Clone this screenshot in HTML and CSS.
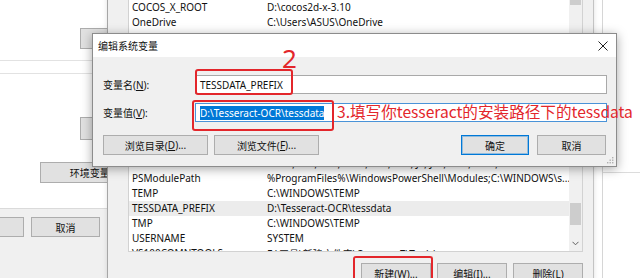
FILE: index.html
```html
<!DOCTYPE html>
<html lang="zh-CN">
<head>
<meta charset="utf-8">
<title>编辑系统变量</title>
<link rel="stylesheet" href="styles.css">
</head>
<body>
<div class="win-bg"><div class="bg-rule"></div></div>

<div class="win-sys">
  <div class="sys-panel">
    <div class="btn sys-btn-a">设置(S)...</div>
    <div class="sys-rule first"></div>
    <div class="sys-rule second"></div>
    <div class="btn sys-btn-b">设置(E)...</div>
    <div class="btn sys-btn-c">环境变量(<u>N</u>)...</div>
  </div>
  <div class="sys-foot">
    <div class="btn sys-foot-btn">确定</div>
    <div class="btn sys-foot-btn">取消</div>
  </div>
</div>

<div class="win-env">
  <div class="list list-top">
    <div class="rows">
      <div class="row"><span class="k">ChocolateyInstall</span><span class="v">C:\ProgramData\chocolatey</span></div>
      <div class="row"><span class="k">ChocolateyLastPathUpdate</span><span class="v">132356789012345678</span></div>
      <div class="row"><span class="k">COCOS_X_ROOT</span><span class="v">D:\cocos2d-x-3.10</span></div>
      <div class="row"><span class="k">OneDrive</span><span class="v">C:\Users\ASUS\OneDrive</span></div>
      <div class="row"><span class="k">OneDriveConsumer</span><span class="v">C:\Users\ASUS\OneDrive</span></div>
      <div class="row"><span class="k">Path</span><span class="v">C:\Users\ASUS\AppData\Local\Microsoft\WindowsApps;</span></div>
      <div class="row"><span class="k">TEMP</span><span class="v">C:\Users\ASUS\AppData\Local\Temp</span></div>
      <div class="row"><span class="k">TMP</span><span class="v">C:\Users\ASUS\AppData\Local\Temp</span></div>
    </div>
    <div class="vscroll">
      <div class="thumb thumb-top"></div>
    </div>
  </div>

  <div class="list list-bottom">
    <div class="rows">
      <div class="row"><span class="k">NUMBER_OF_PROCESSORS</span><span class="v">8</span></div>
      <div class="row"><span class="k">OS</span><span class="v">Windows_NT</span></div>
      <div class="row"><span class="k">Path</span><span class="v">C:\ProgramData\Oracle\Java\javapath;C:\WINDOWS\system32;</span></div>
      <div class="row"><span class="k">PATHEXT</span><span class="v">.COM;.EXE;.BAT;.CMD;.VBS;.VBE;.JS;.JSE;.WSF;.WSH;.MSC</span></div>
      <div class="row"><span class="k">PSModulePath</span><span class="v">%ProgramFiles%\WindowsPowerShell\Modules;C:\WINDOWS\s...</span></div>
      <div class="row"><span class="k">TEMP</span><span class="v">C:\WINDOWS\TEMP</span></div>
      <div class="row sel"><span class="k">TESSDATA_PREFIX</span><span class="v">D:\Tesseract-OCR\tessdata</span></div>
      <div class="row"><span class="k">TMP</span><span class="v">C:\WINDOWS\TEMP</span></div>
      <div class="row"><span class="k">USERNAME</span><span class="v">SYSTEM</span></div>
      <div class="row"><span class="k">VS100COMNTOOLS</span><span class="v">E:\工具\新建文件夹\Common7\Tools\</span></div>
    </div>
    <div class="vscroll">
      <div class="thumb thumb-bottom"></div>
      <svg class="chev" width="7" height="5" viewBox="0 0 7 5"><path d="M0.5 0.8 L3.5 3.8 L6.5 0.8" fill="none" stroke="#606060" stroke-width="1"/></svg>
    </div>
  </div>

  <div class="env-btns">
    <div class="btn env-btn">新建(<u>W</u>)...</div>
    <div class="btn env-btn">编辑(<u>I</u>)...</div>
    <div class="btn env-btn">删除(<u>L</u>)</div>
  </div>
</div>

<div class="dlg">
  <div class="dlg-title">
    <span class="dlg-title-text">编辑系统变量</span>
    <svg class="dlg-close" width="10" height="10" viewBox="0 0 10 10"><path d="M0.5 0.5 L9.5 9.5 M9.5 0.5 L0.5 9.5" stroke="#222" stroke-width="1" fill="none"/></svg>
  </div>
  <div class="dlg-body">
    <div class="field">
      <label class="field-label">变量名(<u>N</u>):</label>
      <div class="input">TESSDATA_PREFIX</div>
    </div>
    <div class="field field-2">
      <label class="field-label">变量值(<u>V</u>):</label>
      <div class="input focus"><span class="selected">D:\Tesseract-OCR\tessdata</span></div>
    </div>
    <div class="dlg-btns">
      <div class="btn browse">浏览目录(<u>D</u>)...</div>
      <div class="btn browse">浏览文件(<u>F</u>)...</div>
      <div class="btn ok default">确定</div>
      <div class="btn ok">取消</div>
    </div>
  </div>
  <svg class="grip" width="7" height="7" viewBox="0 0 7 7"><g fill="#b0b0b0"><rect x="5" y="0" width="1.4" height="1.4"/><rect x="2.5" y="2.5" width="1.4" height="1.4"/><rect x="5" y="2.5" width="1.4" height="1.4"/><rect x="0" y="5" width="1.4" height="1.4"/><rect x="2.5" y="5" width="1.4" height="1.4"/><rect x="5" y="5" width="1.4" height="1.4"/></g></svg>
</div>

<div class="mark-2">2</div>
<div class="box box-1"></div>
<div class="box box-2"></div>
<div class="box box-3"></div>
<div class="note">3.填写你tesseract的安装路径下的tessdata</div>
</body>
</html>
```

FILE: styles.css
```css
* { box-sizing: border-box; }

body {
  margin: 0;
  width: 640px;
  height: 278px;
  overflow: hidden;
  position: relative;
  background: #ffffff;
  font-family: "Noto Sans", "Noto Sans CJK SC", sans-serif;
  font-size: 10px;
  color: #000;
}

u { text-decoration: underline; text-underline-offset: 1px; }

.btn {
  background: #e1e1e1;
  border: 1px solid #adadad;
  display: flex;
  align-items: center;
  justify-content: center;
  white-space: nowrap;
  font-family: "Noto Sans", "Noto Sans CJK SC", sans-serif;
  font-size: 10px;
  color: #111;
}

/* background window at the right */
.win-bg {
  position: absolute;
  left: 602px;
  top: -2px;
  width: 38px;
  height: 280px;
  border-left: 1px solid #d6d6d6;
  background: #fff;
}
.bg-rule {
  margin-top: 174px;
  border-top: 1px solid #dcdcdc;
}

/* system properties window (left) */
.win-sys {
  position: absolute;
  left: -220px;
  top: 0;
  width: 350px;
  height: 278px;
  display: flex;
  flex-direction: column;
}
.sys-panel {
  height: 209px;
  background: #fff;
  border-bottom: 1px solid #dadada;
  display: flex;
  flex-direction: column;
  align-items: flex-start;
}
.sys-btn-a { margin: 28px 0 0 300px; width: 121px; height: 21px; }
.sys-rule { align-self: stretch; border-top: 1px solid #e2e2e2; }
.sys-rule.first { margin-top: 11px; }
.sys-rule.second { margin-top: 12px; }
.sys-btn-b { margin: 43px 0 0 300px; width: 121px; height: 23px; }
.sys-btn-c { margin: 22px 0 0 260px; width: 121px; height: 21px; }
.sys-foot {
  flex: 1;
  background: #f0f0f0;
  display: flex;
  gap: 7px;
  padding: 8px 0 0 175px;
}
.sys-foot-btn { width: 69px; height: 20px; }

/* environment variables window */
.win-env {
  position: absolute;
  left: 107px;
  top: -31.5px;
  width: 487px;
  height: 320px;
  background: #f0f0f0;
  border-left: 1px solid #a6a6a6;
  border-right: 1px solid #c4c4c4;
  padding: 0 10px 0 20px;
  display: flex;
  flex-direction: column;
  box-shadow: 0 0 5px rgba(0,0,0,0.12);
}
.list {
  background: #fff;
  border: 1px solid #d2d2d2;
  display: flex;
  overflow: hidden;
  flex: none;
}
.list-top { height: 123px; }
.list-bottom { margin-top: 18px; height: 142.5px; }
.rows { flex: 1; min-width: 0; }
.row {
  display: flex;
  align-items: center;
  height: 15px;
  white-space: nowrap;
  color: #111;
}
.row.sel { background: #ececec; }
.row .k { width: 138px; padding-left: 3px; flex: none; overflow: hidden; }
.row .v { flex: 1; overflow: hidden; }

.vscroll {
  width: 13px;
  flex: none;
  background: #f0f0f0;
  display: flex;
  flex-direction: column;
  align-items: center;
}
.thumb { width: 11px; background: #cdcdcd; }
.thumb-top { margin-top: 18.5px; height: 17px; }
.thumb-bottom { margin-top: 92.5px; height: 22px; }
.chev { margin-top: auto; margin-bottom: 5px; }

.env-btns {
  display: flex;
  justify-content: flex-end;
  gap: 6px;
  margin-top: 11px;
}
.env-btn { width: 70px; height: 21px; }

/* edit dialog */
.dlg {
  position: absolute;
  left: 92px;
  top: 33px;
  width: 525px;
  height: 134px;
  background: #f0f0f0;
  border: 1px solid #8c8c8c;
  box-shadow: 0 2px 10px rgba(0,0,0,0.35);
  display: flex;
  flex-direction: column;
}
.dlg-title {
  height: 23px;
  background: #fff;
  display: flex;
  align-items: center;
  justify-content: space-between;
  padding: 0 8px 0 5px;
  flex: none;
}
.dlg-title-text { font-family: "Noto Sans CJK SC", sans-serif; font-size: 10px; color: #111; }
.dlg-body {
  flex: 1;
  padding: 18px 9px 0 10px;
  display: flex;
  flex-direction: column;
}
.field { display: flex; align-items: center; }
.field-2 { margin-top: 9px; }
.field-label { width: 92px; flex: none; font-family: "Noto Sans", "Noto Sans CJK SC", sans-serif; color: #111; }
.input {
  flex: 1;
  height: 19px;
  background: #fff;
  border: 1px solid #a9a9a9;
  display: flex;
  align-items: center;
  padding-left: 4px;
  white-space: nowrap;
  color: #111;
}
.input.focus { border-color: #4a93d8; }
.selected {
  background: #0078d7;
  color: #fff;
  height: 14px;
  line-height: 14px;
  display: inline-block;
}
.dlg-btns {
  display: flex;
  gap: 6px;
  margin-top: 13px;
  padding-right: 1px;
}
.btn.browse { width: 105px; height: 20px; }
.btn.ok { width: 69px; height: 20px; }
.btn.ok.default {
  margin-left: auto;
  margin-right: 2px;
  width: 68px;
  border-color: #0078d7;
  box-shadow: inset 0 0 0 1px rgba(0,120,215,0.35);
}
.grip { position: absolute; right: 2px; bottom: 2px; }

/* red annotations (overlay) */
.mark-2 {
  position: absolute;
  left: 282px;
  top: 45px;
  font-family: "Noto Sans", sans-serif;
  font-size: 26px;
  line-height: 1;
  color: #e3262b;
}
.box {
  position: absolute;
  border: 2px solid #e3262b;
  border-radius: 3px;
}
.box-1 { left: 195px; top: 69px; width: 98px; height: 26px; }
.box-2 { left: 192px; top: 100px; width: 142px; height: 31px; }
.box-3 { left: 353px; top: 256px; width: 80px; height: 22px; border-bottom: none; border-radius: 3px 3px 0 0; }
.note {
  position: absolute;
  left: 337px;
  top: 104px;
  font-family: "Noto Sans CJK SC", sans-serif;
  font-size: 15.6px;
  line-height: 1;
  color: #e3262b;
  white-space: nowrap;
}
```
